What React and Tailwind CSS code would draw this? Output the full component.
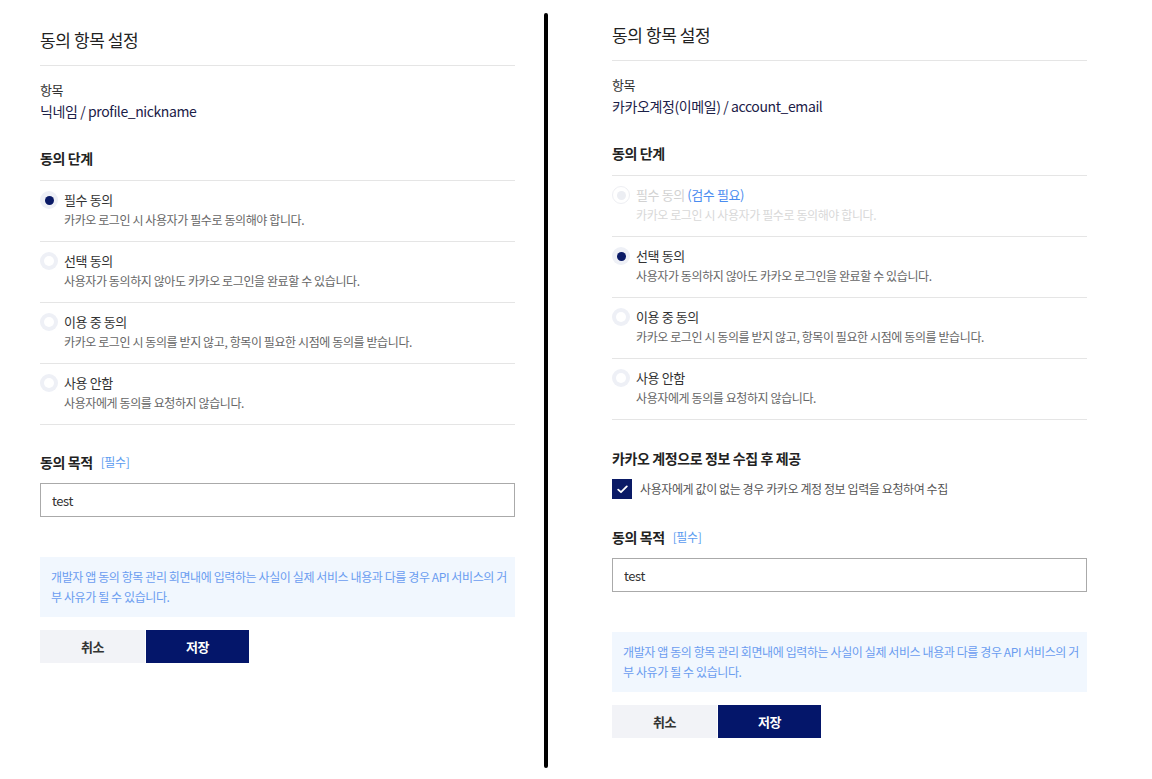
import React from 'react';

const FONT = { fontFamily: '"Noto Sans CJK KR", "Noto Sans", sans-serif' };

const OPTIONS = [
	{ key: 'required', label: '필수 동의', desc: '카카오 로그인 시 사용자가 필수로 동의해야 합니다.' },
	{ key: 'optional', label: '선택 동의', desc: '사용자가 동의하지 않아도 카카오 로그인을 완료할 수 있습니다.' },
	{ key: 'inuse', label: '이용 중 동의', desc: '카카오 로그인 시 동의를 받지 않고, 항목이 필요한 시점에 동의를 받습니다.' },
	{ key: 'none', label: '사용 안함', desc: '사용자에게 동의를 요청하지 않습니다.' },
];

function Radio({ checked, disabled }) {
	return (
		<span className={`mt-[1px] flex h-[18px] w-[18px] shrink-0 items-center justify-center rounded-full ${disabled ? 'border border-[#eeeff3] bg-white' : 'bg-[#eef0f6]'}`}>
			{checked && <span className="h-[9px] w-[9px] rounded-full bg-[#0a1a66]" />}
			{!checked && !disabled && <span className="h-[10px] w-[10px] rounded-full bg-white" />}
			{disabled && <span className="h-[9px] w-[9px] rounded-full bg-[#eceef3]" />}
		</span>
	);
}

function OptionRow({ opt, checked, disabled, review }) {
	return (
		<div className="flex gap-[6px] border-b border-[#e5e5e5] pt-[9px] pb-[11px]">
			<Radio checked={checked} disabled={disabled} />
			<div className="flex flex-col">
				<span className={`text-[13px] leading-[20px] ${disabled ? 'text-[#d2d2d2]' : 'text-[#333]'}`}>
					{opt.label}
					{review && <span className="text-[#4a8cf0]"> (검수 필요)</span>}
				</span>
				<span className={`text-[12px] leading-[20px] ${disabled ? 'text-[#d8d8d8]' : 'text-[#666]'}`}>{opt.desc}</span>
			</div>
		</div>
	);
}

function Panel({ item, selected, disableRequired, showCollect, top }) {
	return (
		<div className={`w-[475px] shrink-0 tracking-[-0.4px] ${top}`} style={FONT}>
			<h2 className="border-b border-[#e5e5e5] pb-[12px] text-[17px] leading-[26px] text-[#222]">동의 항목 설정</h2>

			<div className="mt-[14px] text-[13px] leading-[20px] text-[#333]">항목</div>
			<div className="text-[14px] leading-[22px] text-[#1b2047]">{item}</div>

			<div className="mt-[26px] border-b border-[#e5e5e5] pb-[12px] text-[14px] font-bold leading-[20px] text-[#222]">동의 단계</div>
			<div>
				{OPTIONS.map(opt => (
					<OptionRow
						key={opt.key}
						opt={opt}
						checked={selected === opt.key}
						disabled={disableRequired && opt.key === 'required'}
						review={disableRequired && opt.key === 'required'}
					/>
				))}
			</div>

			{showCollect && (
				<>
					<div className="mt-[28px] text-[14px] font-bold leading-[20px] text-[#222]">카카오 계정으로 정보 수집 후 제공</div>
					<label className="mt-[11px] flex items-center gap-[8px]">
						<span className="flex h-[20px] w-[20px] items-center justify-center bg-[#0a1a66]">
							<svg width="11" height="9" viewBox="0 0 11 9" fill="none">
								<path d="M1.2 4.6 L4 7.2 L9.8 1.4" stroke="white" strokeWidth="1.8" strokeLinecap="round" strokeLinejoin="round" />
							</svg>
						</span>
						<span className="text-[12px] leading-[20px] text-[#555]">사용자에게 값이 없는 경우 카카오 계정 정보 입력을 요청하여 수집</span>
					</label>
				</>
			)}

			<div className={`${showCollect ? 'mt-[28px]' : 'mt-[27px]'} flex items-center text-[14px] font-bold leading-[20px] text-[#222]`}>
				동의 목적
				<span className="ml-[8px] text-[12px] font-normal text-[#5b9bf0]">[필수]</span>
			</div>
			<input
				readOnly
				value="test"
				className="mt-[11px] block h-[34px] w-full border border-[#aaa] px-[11px] text-[13px] text-[#333] outline-none"
				style={FONT}
			/>

			<div className="mt-[40px] break-all bg-[#f1f7fe] py-[10px] pl-[11px] pr-[4px] text-[12px] leading-[20px] text-[#6a9cf0]">
				개발자 앱 동의 항목 관리 회면내에 입력하는 사실이 실제 서비스 내용과 다를 경우 API 서비스의 거부 사유가 될 수 있습니다.
			</div>

			<div className="mt-[13px] flex gap-[1px]">
				<button className="h-[33px] w-[105px] bg-[#f2f3f7] text-[13px] font-bold text-[#333]">취소</button>
				<button className="h-[33px] w-[103px] bg-[#04166a] text-[13px] font-bold text-white">저장</button>
			</div>
		</div>
	);
}

export default function App() {
	return (
		<div className="flex h-[779px] w-[1152px] items-start bg-white">
			<div className="ml-[40px]">
				<Panel item="닉네임 / profile_nickname" selected="required" top="pt-[27px]" />
			</div>
			<div className="ml-[29px] mt-[13px] h-[755px] w-[4px] shrink-0 rounded-full bg-black" />
			<div className="ml-[64px]">
				<Panel item="카카오계정(이메일) / account_email" selected="optional" disableRequired showCollect top="pt-[22px]" />
			</div>
		</div>
	);
}
